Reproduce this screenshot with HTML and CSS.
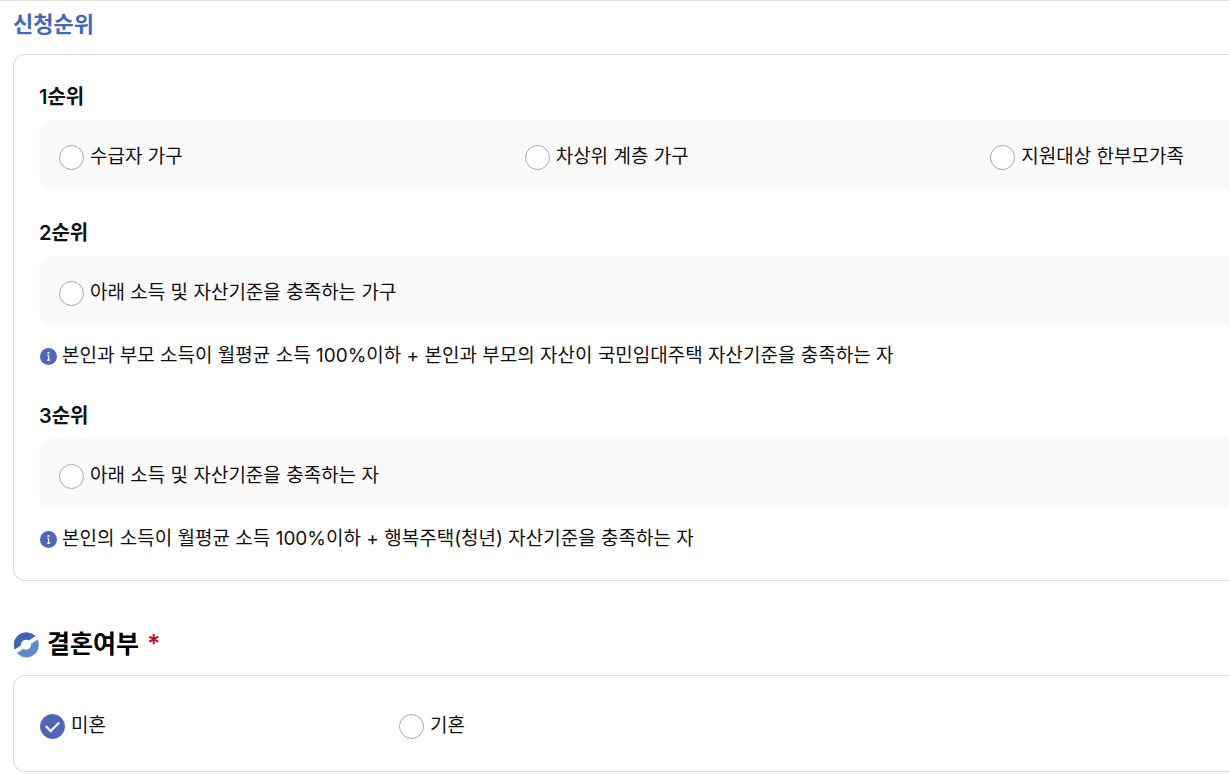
FILE: index.html
```html
<!DOCTYPE html>
<html lang="ko">
<head>
  <meta charset="UTF-8" />
  <meta name="viewport" content="width=device-width, initial-scale=1" />
  <title>신청순위</title>
  <link rel="stylesheet" href="styles.css">
</head>
<body>

  <form class="page">

    <!-- 신청순위 -->
    <h2 class="sub-title">신청순위</h2>
    <div class="card">
      <section class="rank">
        <h3>1순위</h3>
        <div class="option-row">
          <label class="option"><input type="radio" name="rank" value="1-1" /><span>수급자 가구</span></label>
          <label class="option"><input type="radio" name="rank" value="1-2" /><span>차상위 계층 가구</span></label>
          <label class="option"><input type="radio" name="rank" value="1-3" /><span>지원대상 한부모가족</span></label>
        </div>
      </section>

      <section class="rank">
        <h3>2순위</h3>
        <div class="option-row">
          <label class="option"><input type="radio" name="rank" value="2" /><span>아래 소득 및 자산기준을 충족하는 가구</span></label>
        </div>
        <p class="info">
          <svg class="info-icon" viewBox="0 0 17 17" aria-hidden="true">
            <circle cx="8.5" cy="8.5" r="8.5" fill="#5066bd" />
            <circle cx="8.4" cy="5" r="1.1" fill="#fff" />
            <path d="M7.2 7.5h1.4v4.6M7 12.2h3.2" fill="none" stroke="#fff" stroke-width="1.2" />
          </svg>
          <span>본인과 부모 소득이 월평균 소득 100%이하 + 본인과 부모의 자산이 국민임대주택 자산기준을 충족하는 자</span>
        </p>
      </section>

      <section class="rank">
        <h3>3순위</h3>
        <div class="option-row">
          <label class="option"><input type="radio" name="rank" value="3" /><span>아래 소득 및 자산기준을 충족하는 자</span></label>
        </div>
        <p class="info">
          <svg class="info-icon" viewBox="0 0 17 17" aria-hidden="true">
            <circle cx="8.5" cy="8.5" r="8.5" fill="#5066bd" />
            <circle cx="8.4" cy="5" r="1.1" fill="#fff" />
            <path d="M7.2 7.5h1.4v4.6M7 12.2h3.2" fill="none" stroke="#fff" stroke-width="1.2" />
          </svg>
          <span>본인의 소득이 월평균 소득 100%이하 + 행복주택(청년) 자산기준을 충족하는 자</span>
        </p>
      </section>
    </div>

    <!-- 결혼여부 -->
    <h2 class="main-title">
      <svg class="title-icon" viewBox="0 0 26 26" aria-hidden="true">
        <defs>
          <clipPath id="disc"><circle cx="13.3" cy="12.8" r="12.4" /></clipPath>
        </defs>
        <circle cx="13.7" cy="13.5" r="12.3" fill="#d5d9e6" />
        <g clip-path="url(#disc)">
          <rect width="26" height="26" fill="#5f89c8" />
          <path d="M0 0H26V3L0 20Z" fill="#4265b0" />
          <path d="M-1 19.2L27 1.4V6.2L-1 24.2Z" fill="#fff" />
        </g>
        <circle cx="13" cy="12.8" r="5" fill="#fff" />
      </svg>
      <span>결혼여부</span>
      <em class="required">*</em>
    </h2>
    <div class="card marriage">
      <label class="option"><input type="radio" name="marriage" value="single" checked /><span>미혼</span></label>
      <label class="option"><input type="radio" name="marriage" value="married" /><span>기혼</span></label>
    </div>

  </form>

</body>
</html>
```
FILE: styles.css
```css
/* === Base === */
* {
  box-sizing: border-box;
}

body {
  margin: 0;
  background: #ffffff;
  color: #111111;
  font-family: Inter, 'Noto Sans CJK KR', sans-serif;
  font-size: 19px;
  line-height: 34px;
}

h2,
h3,
p {
  margin: 0;
}

.page {
  padding: 7px 0 0 13px;
  border-top: 1px solid #dddddd;
}

/* === Titles === */
.sub-title {
  margin-bottom: 14px;
  color: #4468b8;
  font-size: 22px;
  font-weight: 600;
  line-height: 32px;
}

.main-title {
  display: flex;
  align-items: center;
  margin: 47px 0 15px;
  color: #000000;
  font-size: 25px;
  font-weight: 600;
  line-height: 32px;
}

.title-icon {
  width: 26px;
  height: 26px;
  margin: 2px 8px 0 0;
}

.required {
  margin-left: 8px;
  color: #c00d2d;
  font-style: normal;
}

/* === Cards, open on the right side === */
.card {
  padding: 25px 0 24px 25px;
  border: 1px solid #dddddd;
  border-right: 0;
  border-radius: 12px 0 0 12px;
}

.rank + .rank {
  margin-top: 26px;
}

.rank h3 {
  margin-bottom: 6px;
  font-size: 20px;
  font-weight: 600;
}

.option-row {
  display: flex;
  padding: 20px 0 16px 20px;
  background: #fafafa;
  border-radius: 12px 0 0 12px;
}

.marriage {
  display: flex;
  padding: 33px 0 28px 26px;
}

/* === Options === */
.option {
  display: flex;
  cursor: pointer;
}

.option:not(:last-child) {
  width: 39.8%;
}

.marriage .option:not(:last-child) {
  width: 30.2%;
}

.option input {
  appearance: none;
  flex: none;
  width: 25px;
  height: 25px;
  margin: 5px 6px 0 0;
  background: #ffffff;
  border: 1px solid #aaaaaa;
  border-radius: 50%;
}

.option input:checked {
  display: flex;
  align-items: center;
  justify-content: center;
  background: #5066bd;
  border-color: #5066bd;
}

.option input:checked::after {
  content: '';
  width: 11px;
  height: 6px;
  margin-bottom: 3px;
  border-left: 2px solid #ffffff;
  border-bottom: 2px solid #ffffff;
  transform: rotate(-45deg);
}

/* === Info text === */
.info {
  display: flex;
  align-items: center;
  gap: 5px;
  margin-top: 13px;
}

.info-icon {
  flex: none;
  width: 17px;
  height: 17px;
  margin: 1px 0 0 1px;
}
```
